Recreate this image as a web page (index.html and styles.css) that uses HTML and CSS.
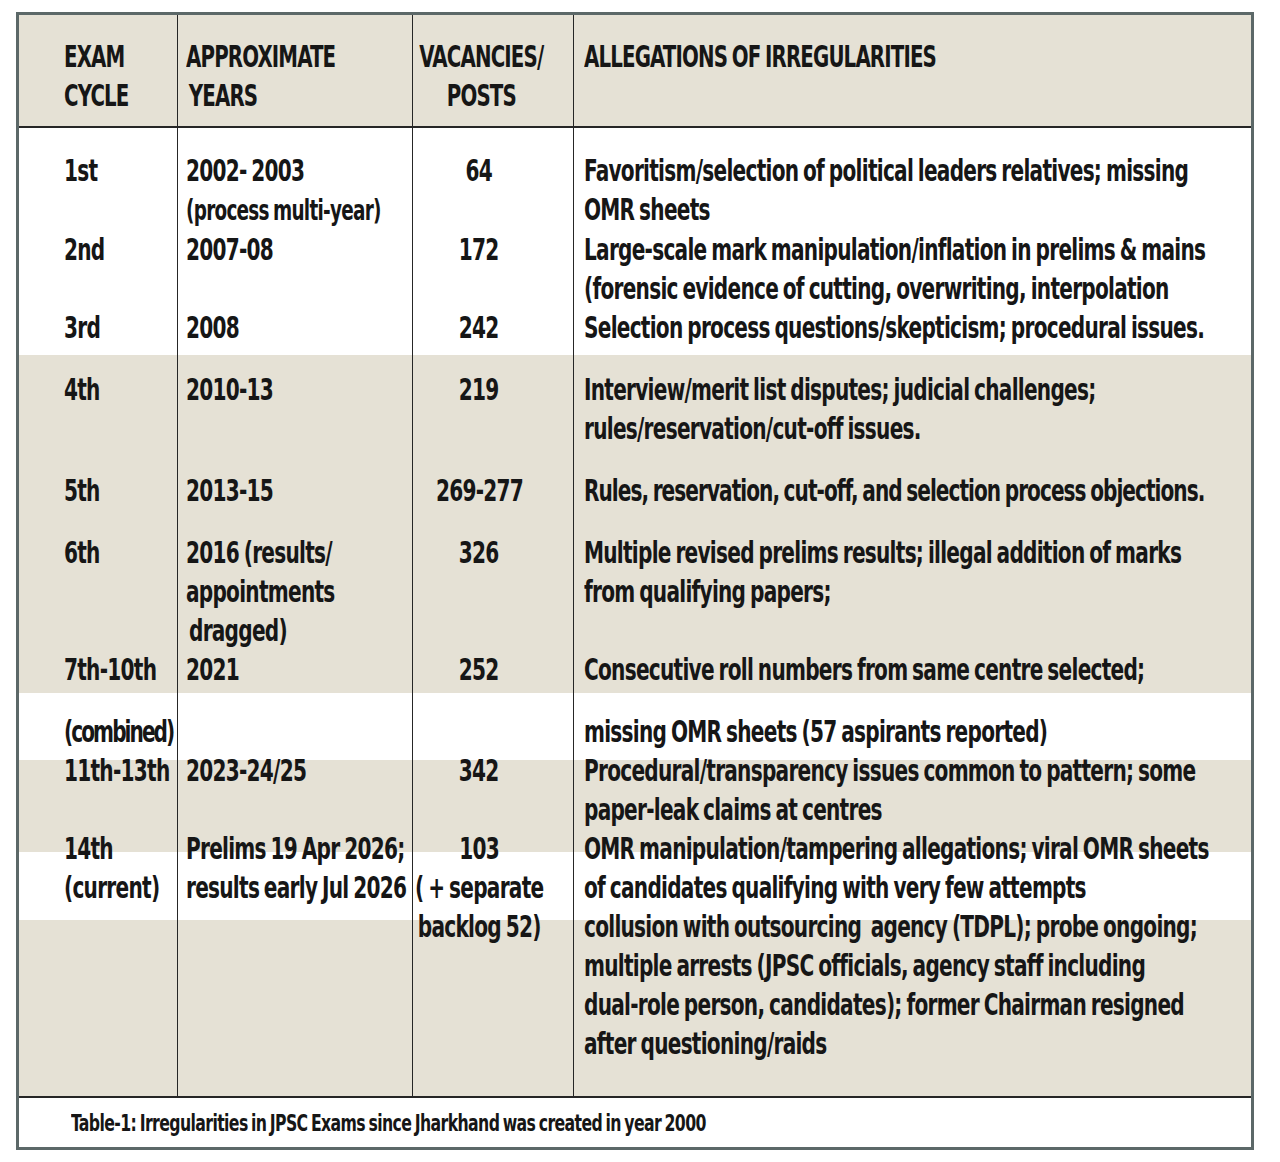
FILE: index.html
```html
<!DOCTYPE html>
<html lang="en">
<head>
<meta charset="utf-8">
<title>Irregularities in JPSC Exams</title>
<link rel="stylesheet" href="styles.css">
</head>
<body>
<div class="sheet">
  <div class="grid head">
    <div class="cell c1"><span class="t">EXAM<br>CYCLE</span></div>
    <div class="cell c2"><span class="t">APPROXIMATE<br><span class="ind">YEARS</span></span></div>
    <div class="cell c3"><span class="t">VACANCIES/<br>POSTS</span></div>
    <div class="cell c4"><span class="t">ALLEGATIONS OF IRREGULARITIES</span></div>
  </div>
  <div class="grid body">
    <div class="row first">
      <div class="cell c1"><span class="t">1st</span></div>
      <div class="cell c2"><span class="t">2002- 2003<br><span class="small">(process multi-year)</span></span></div>
      <div class="cell c3"><span class="t">64</span></div>
      <div class="cell c4"><span class="t">Favoritism/selection of political leaders relatives; missing<br>OMR sheets</span></div>
    </div>
    <div class="row">
      <div class="cell c1"><span class="t">2nd</span></div>
      <div class="cell c2"><span class="t">2007-08</span></div>
      <div class="cell c3"><span class="t">172</span></div>
      <div class="cell c4"><span class="t">Large-scale mark manipulation/inflation in prelims &amp; mains<br>(forensic evidence of cutting, overwriting, interpolation</span></div>
    </div>
    <div class="row">
      <div class="cell c1"><span class="t">3rd</span></div>
      <div class="cell c2"><span class="t">2008</span></div>
      <div class="cell c3"><span class="t">242</span></div>
      <div class="cell c4"><span class="t">Selection process questions/skepticism; procedural issues.</span></div>
    </div>
    <div class="row sep">
      <div class="cell c1"><span class="t">4th</span></div>
      <div class="cell c2"><span class="t">2010-13</span></div>
      <div class="cell c3"><span class="t">219</span></div>
      <div class="cell c4"><span class="t">Interview/merit list disputes; judicial challenges;<br>rules/reservation/cut-off issues.</span></div>
    </div>
    <div class="row sep">
      <div class="cell c1"><span class="t">5th</span></div>
      <div class="cell c2"><span class="t">2013-15</span></div>
      <div class="cell c3"><span class="t">269-277</span></div>
      <div class="cell c4"><span class="t snug">Rules, reservation, cut-off, and selection process objections.</span></div>
    </div>
    <div class="row sep">
      <div class="cell c1"><span class="t">6th</span></div>
      <div class="cell c2"><span class="t">2016 (results/<br>appointments<br><span class="ind">dragged)</span></span></div>
      <div class="cell c3"><span class="t">326</span></div>
      <div class="cell c4"><span class="t">Multiple revised prelims results; illegal addition of marks<br>from qualifying papers;</span></div>
    </div>
    <div class="row">
      <div class="cell c1"><span class="t">7th-10th</span></div>
      <div class="cell c2"><span class="t">2021</span></div>
      <div class="cell c3"><span class="t">252</span></div>
      <div class="cell c4"><span class="t">Consecutive roll numbers from same centre selected;</span></div>
    </div>
    <div class="row sep">
      <div class="cell c1"><span class="t tight">(combined)</span></div>
      <div class="cell c2"></div>
      <div class="cell c3"></div>
      <div class="cell c4"><span class="t">missing OMR sheets (57 aspirants reported)</span></div>
    </div>
    <div class="row">
      <div class="cell c1"><span class="t">11th-13th</span></div>
      <div class="cell c2"><span class="t">2023-24/25</span></div>
      <div class="cell c3"><span class="t">342</span></div>
      <div class="cell c4"><span class="t">Procedural/transparency issues common to pattern; some<br>paper-leak claims at centres</span></div>
    </div>
    <div class="row">
      <div class="cell c1"><span class="t">14th<br>(current)</span></div>
      <div class="cell c2"><span class="t">Prelims 19 Apr 2026;<br>results early Jul 2026</span></div>
      <div class="cell c3"><span class="t">103<br>( + separate<br>backlog 52)</span></div>
      <div class="cell c4"><span class="t">OMR manipulation/tampering allegations; viral OMR sheets<br>of candidates qualifying with very few attempts<br>collusion with outsourcing&nbsp; agency (TDPL); probe ongoing;<br>multiple arrests (JPSC officials, agency staff including<br>dual-role person, candidates); former Chairman resigned<br>after questioning/raids</span></div>
    </div>
  </div>
  <div class="caption"><span class="t">Table-1: Irregularities in JPSC Exams since Jharkhand was created in year 2000</span></div>
</div>
</body>
</html>
```

FILE: styles.css
```css
* { box-sizing: border-box; }
html, body { margin: 0; padding: 0; background: #ffffff; }
body {
  font-family: "Liberation Sans Narrow", "DejaVu Sans Condensed", "DejaVu Sans", sans-serif;
  font-weight: 700;
  color: #161616;
}
.sheet {
  width: 1238px;
  margin: 12px 0 0 16px;
  border: 3px solid #5c6868;
  background: #ffffff;
}
.grid {
  display: grid;
  grid-template-columns: 158px 235px 161px minmax(0, 1fr);
}
.cell {
  display: flex;
  justify-content: flex-start;
  align-items: flex-start;
  min-width: 0;
}
.grid .c2, .grid .c3, .grid .c4 { border-left: 1.5px solid #262626; }
.c1 { padding-left: 45px; }
.c2 { padding-left: 8px; }
.c3 { justify-content: center; text-align: center; padding-right: 28px; }
.c4 { padding-left: 10px; }
.t {
  display: block;
  flex: none;
  width: max-content;
  white-space: nowrap;
  transform: scaleX(0.745);
  transform-origin: 0 0;
}
.c3 .t { transform-origin: 50% 0; }
.head {
  height: 113px;
  background: #e5e1d5;
  border-bottom: 2px solid #262626;
  font-size: 31px;
  line-height: 39px;
  letter-spacing: -1.2px;
  word-spacing: -2px;
}
.head .cell { padding-top: 22px; }
.head .c3 { padding-right: 24px; }
.head .t { transform: scaleX(0.71); }
.ind { padding-left: 4px; }
.body {
  height: 968px;
  grid-template-rows: repeat(9, auto) 1fr;
  font-size: 30px;
  line-height: 39px;
  letter-spacing: -1px;
  word-spacing: -2px;
  background: linear-gradient(to bottom,
    #ffffff 0 227px,
    #e5e1d5 227px 565px,
    #ffffff 565px 632px,
    #e5e1d5 632px 724px,
    #ffffff 724px 792px,
    #e5e1d5 792px 100%);
}
.row { display: contents; }
.row.first > .cell { padding-top: 23px; }
.row.sep > .cell { padding-top: 23px; }
.small { font-size: 27.5px; }
.tight { letter-spacing: -2.6px; }
.snug { letter-spacing: -1.3px; }
.caption {
  height: 51px;
  border-top: 2px solid #262626;
  padding-left: 52px;
  padding-top: 2px;
  font-size: 23px;
  line-height: 47px;
  letter-spacing: -0.8px;
  word-spacing: -2px;
}
.caption .t { transform: scaleX(0.76); }
```
